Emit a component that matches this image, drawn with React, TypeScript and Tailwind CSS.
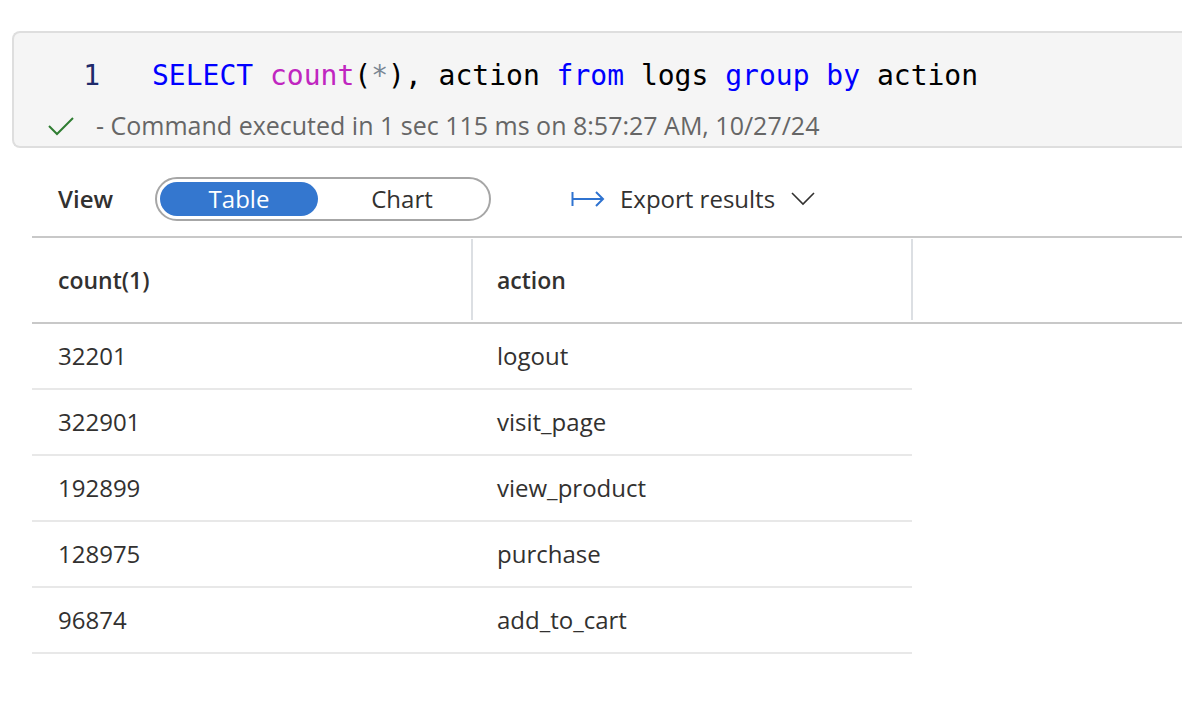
import React from 'react';

const ui = { fontFamily: '"Open Sans", "Noto Sans", Arial, sans-serif' };
const mono = { fontFamily: '"DejaVu Sans Mono", "Liberation Mono", monospace' };

const rows: [string, string][] = [
  ['32201', 'logout'],
  ['322901', 'visit_page'],
  ['192899', 'view_product'],
  ['128975', 'purchase'],
  ['96874', 'add_to_cart'],
];

function CodeCell() {
  return (
    <div className="ml-3 h-[117px] rounded-l-lg border-2 border-r-0 border-[#dedede] bg-[#f5f5f5]">
      <div className="flex items-center h-[80px] pt-[6px] text-[28px] leading-none" style={mono}>
        <span className="w-[86px] text-right text-[#1f2a6b]">1</span>
        <span className="ml-[52px] whitespace-pre">
          <span className="text-[#0000ff]">SELECT</span>{' '}
          <span className="text-[#c026c0]">count</span>
          <span className="text-black">(</span>
          <span className="text-[#7a8794]">*</span>
          <span className="text-black">), action </span>
          <span className="text-[#0000ff]">from</span>
          <span className="text-black"> logs </span>
          <span className="text-[#0000ff]">group by</span>
          <span className="text-black"> action</span>
        </span>
      </div>
      <div className="flex items-center h-[26px] text-[25px] text-[#666]" style={ui}>
        <svg className="ml-[33px]" width="28" height="22" viewBox="0 0 28 22" fill="none">
          <path d="M2 11 L10 19 L26 3" stroke="#2f7d32" strokeWidth="2" />
        </svg>
        <span className="ml-[21px]">- Command executed in 1 sec 115 ms on 8:57:27 AM, 10/27/24</span>
      </div>
    </div>
  );
}

function Toolbar() {
  return (
    <div className="flex items-center h-[88px] pt-[14px] pl-[58px] text-[24px] text-[#323130]" style={ui}>
      <span className="w-[97px] font-semibold">View</span>
      <div className="flex h-[44px] w-[336px] items-center rounded-full border-2 border-[#a6a6a6] bg-white p-[3px]">
        <div className="flex h-full w-[158px] items-center justify-center rounded-full bg-[#3477cf] text-white">
          Table
        </div>
        <div className="flex flex-1 items-center justify-center text-[#323130]">Chart</div>
      </div>
      <div className="ml-[80px] flex items-center">
        <svg width="34" height="18" viewBox="0 0 34 18" fill="none">
          <path d="M1.5 2 V16" stroke="#2f73d0" strokeWidth="2" />
          <path d="M2 9 H32" stroke="#2f73d0" strokeWidth="2" />
          <path d="M25 2 L32 9 L25 16" stroke="#2f73d0" strokeWidth="2" />
        </svg>
        <span className="ml-[15px]">Export results</span>
        <svg className="ml-[16px]" width="24" height="14" viewBox="0 0 24 14" fill="none">
          <path d="M1 1 L12 12 L23 1" stroke="#323130" strokeWidth="1.6" />
        </svg>
      </div>
    </div>
  );
}

function ResultsTable() {
  return (
    <div className="ml-8 text-[24px] text-[#323130]" style={ui}>
      <div className="flex h-[88px] border-y-2 border-[#c8c8c8] text-[23px]">
        <div className="flex w-[439px] items-center pl-[26px] font-semibold">count(1)</div>
        <div className="my-[1px] mb-[2px] w-[2px] bg-[#dcdfe3]" />
        <div className="flex w-[438px] items-center pl-[24px] font-semibold">action</div>
        <div className="my-[1px] mb-[2px] w-[2px] bg-[#dcdfe3]" />
        <div className="flex-1" />
      </div>
      {rows.map(([n, a]) => (
        <div key={a} className="flex h-[66px] w-[880px] items-center border-b-2 border-[#e8e8e8]">
          <div className="w-[441px] pl-[26px]">{n}</div>
          <div className="pl-[24px]">{a}</div>
        </div>
      ))}
    </div>
  );
}

export default function App() {
  return (
    <div className="h-[706px] w-[1182px] overflow-hidden bg-white pt-[31px]">
      <CodeCell />
      <Toolbar />
      <ResultsTable />
    </div>
  );
}
